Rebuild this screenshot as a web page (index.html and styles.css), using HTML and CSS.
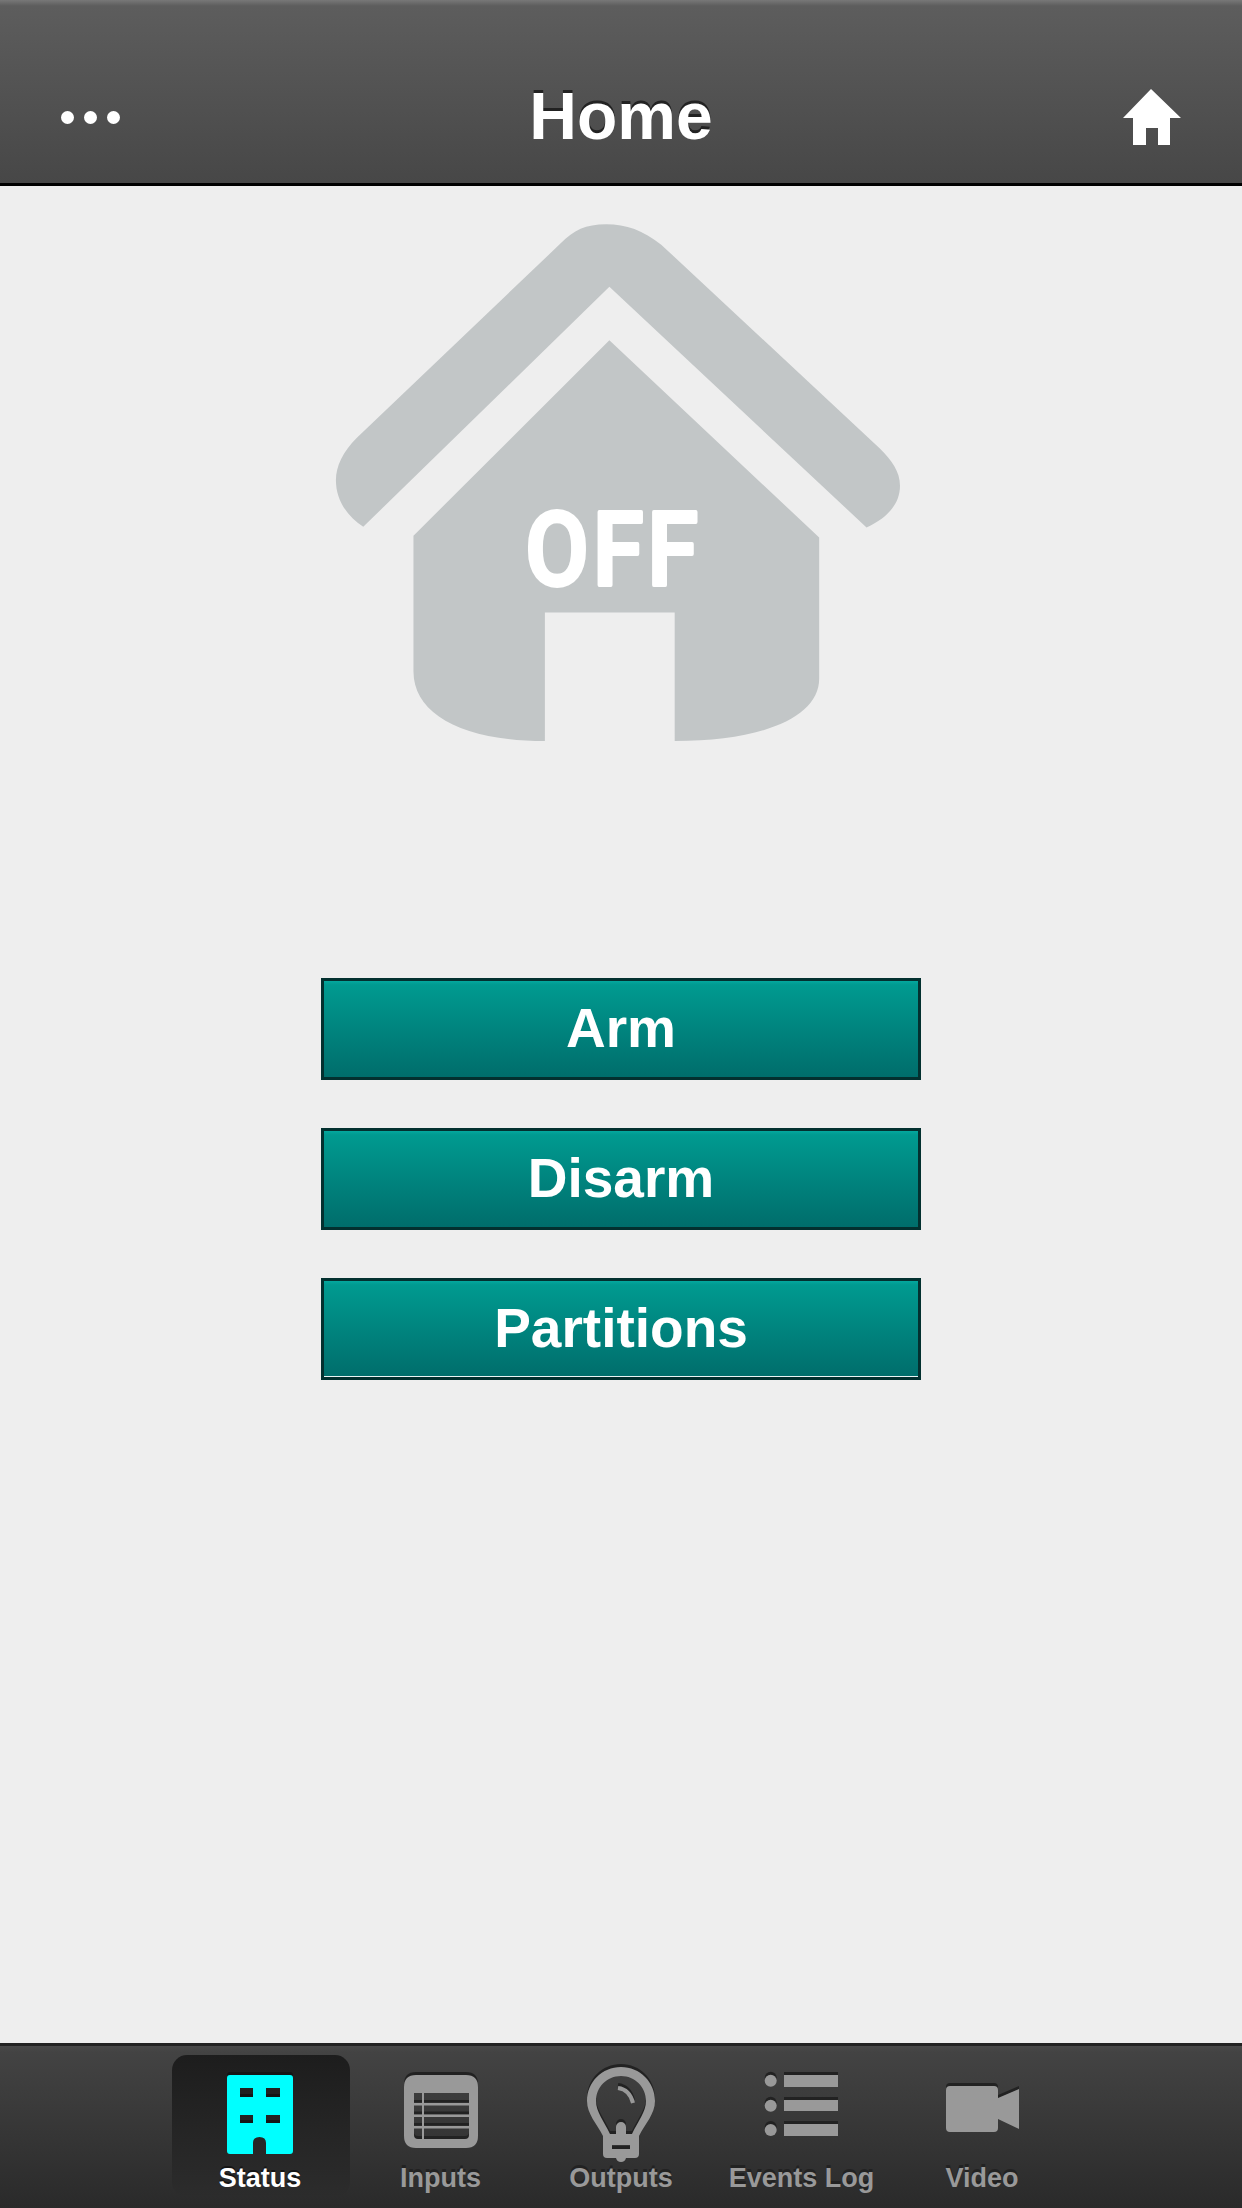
FILE: index.html
```html
<!DOCTYPE html>
<html lang="en">
<head>
<meta charset="utf-8">
<title>Home</title>
<link rel="stylesheet" href="styles.css">
</head>
<body>
<header class="topbar">
  <div class="dots"><span></span><span></span><span></span></div>
  <h1 class="title">Home</h1>
  <svg class="home-btn" viewBox="0 0 58 56"><path d="M28 0 58 29H47V56H35V39H23V56H10V29H0Z"/></svg>
</header>
<main class="content">
  <svg class="state" viewBox="2.45 0 1568 1568" preserveAspectRatio="none">
    <path class="state-fill" d="M155 915 758 243 1388 917C1440 890 1470 850 1470 800 1470 760 1450 730 1420 695L885 125C840 85 800 68 750 68 700 68 670 85 640 120L140 665C105 705 88 745 88 785 88 840 115 885 155 915Z"/>
    <path class="state-fill" d="M758 393 1272 945V1340C1272 1450 1130 1515 918 1515V1155H600V1515C400 1515 278 1440 278 1320V940Z"/>
    <text class="state-text" transform="translate(552 1079) scale(.795 1)">OFF</text>
  </svg>
  <div class="actions">
    <button class="action">Arm</button>
    <button class="action">Disarm</button>
    <button class="action action-focus">Partitions</button>
  </div>
</main>
<nav class="tabbar">
  <a class="tab tab-active">
    <svg class="tab-icon" viewBox="0 0 120 100"><path fill-rule="evenodd" d="M30 13H90Q93 13 93 16V89Q93 92 90 92H66V81Q66 75 59.500 75 53 75 53 81V92H30Q27 92 27 89V16Q27 13 30 13ZM40 26V35H53V26ZM66 26V35H80V26ZM40 53V61H53V53ZM66 53V61H80V53Z"/></svg>
    <span class="tab-label">Status</span>
  </a>
  <a class="tab">
    <svg class="tab-icon" viewBox="0 0 120 100"><path fill-rule="evenodd" d="M35 13H85Q97 13 97 25V74Q97 86 85 86H35Q23 86 23 74V25Q23 13 35 13ZM33 31V73Q33 77 37 77H84Q88 77 88 73V31Z"/><path d="M33 41H88V43.500H33ZM33 52.500H88V55H33ZM33 64H88V66.500H33ZM41 31H43V77H41Z"/></svg>
    <span class="tab-label">Inputs</span>
  </a>
  <a class="tab">
    <svg class="tab-icon" viewBox="0 0 120 100"><path fill-rule="evenodd" d="M60 5C79 5 94 20 94 39 94 52 84 62 78 74V92Q78 96 74 96H65Q64 100 60 100 56 100 55 96H46Q42 96 42 92V74C36 62 26 52 26 39 26 20 41 5 60 5ZM60 14C46 14 35 25 35 39 35 50 43 59 49 72H55V65A5 5 0 0 1 65 65V72H71C77 59 85 50 85 39 85 25 74 14 60 14ZM51 83V87H69V83Z"/><path class="bulb-glint" d="M57 26C65 27 70 33 72 41"/></svg>
    <span class="tab-label">Outputs</span>
  </a>
  <a class="tab">
    <svg class="tab-icon" viewBox="0 0 120 100"><circle cx="28.700" cy="18.700" r="6"/><circle cx="28.700" cy="43.700" r="6"/><circle cx="28.700" cy="68" r="6"/><path d="M42 13H96V25H42ZM42 38H96V49H42ZM42 62H96V74H42Z"/></svg>
    <span class="tab-label">Events Log</span>
  </a>
  <a class="tab">
    <svg class="tab-icon" viewBox="0 0 120 100"><path d="M28 24H72Q76 24 76 28V66Q76 70 72 70H28Q24 70 24 66V28Q24 24 28 24ZM76 36 97 27V67L76 57Z"/></svg>
    <span class="tab-label">Video</span>
  </a>
</nav>
</body>
</html>
```

FILE: styles.css
```css
* { box-sizing: border-box; }

html, body { height: 100%; }

body {
  margin: 0;
  display: flex;
  flex-direction: column;
  height: 2208px;
  background: #eeeeee;
  font-family: "Liberation Sans", Arial, sans-serif;
  overflow: hidden;
}

.topbar {
  flex: none;
  height: 186px;
  padding: 75px 61px 0 61px;
  display: grid;
  grid-template-columns: 1fr auto 1fr;
  grid-template-rows: 84px;
  align-items: center;
  border-bottom: 3px solid #000;
  background: linear-gradient(#787878 0, #5d5d5d 6px, #474747 100%);
}

.dots { display: flex; gap: 10px; }

.dots span {
  width: 13px;
  height: 13px;
  border-radius: 50%;
  background: #fff;
}

.title {
  margin: 0;
  padding-top: 1px;
  padding-bottom: 3px;
  font-size: 66px;
  font-weight: 700;
  line-height: 80px;
  color: #fff;
  text-shadow: 0 -3px 0 #222;
}

.home-btn {
  justify-self: end;
  width: 58px;
  height: 56px;
  fill: #fff;
}

.content {
  flex: 1;
  display: flex;
  flex-direction: column;
  align-items: center;
  padding-top: 14px;
}

.state { width: 640px; height: 560px; flex: none; }

.state-fill { fill: #c2c6c7; }

.state-text {
  font-family: Roboto, sans-serif;
  font-size: 284px;
  font-weight: 500;
  letter-spacing: 12px;
  fill: #fff;
  stroke: #fff;
  stroke-width: 11px;
  stroke-linejoin: round;
}

.actions {
  margin-top: 218px;
  display: flex;
  flex-direction: column;
  gap: 48px;
}

.action {
  display: block;
  width: 600px;
  height: 102px;
  padding: 0 0 2px;
  border: 3px solid #03302f;
  border-radius: 0;
  background: linear-gradient(#04a89e 0, #009a90 4%, #006d6b 100%);
  color: #fff;
  font-family: inherit;
  font-size: 55px;
  font-weight: 700;
}

.action-focus { box-shadow: inset 0 -1px 0 #e9f5f5; }

.tabbar {
  flex: none;
  height: 165px;
  padding-top: 9px;
  display: grid;
  grid-template-columns: repeat(5, 180.500px);
  justify-content: center;
  align-items: start;
  border-top: 3px solid #232323;
  background: linear-gradient(#4a4a4a 0, #434343 6px, #2a2a2a 100%);
}

.tab {
  height: 142px;
  padding-top: 7px;
  display: flex;
  flex-direction: column;
  align-items: center;
  border-radius: 15px;
}

.tab-active {
  margin-left: 2px;
  padding-right: 2px;
  background: linear-gradient(#1d1d1d, #2c2c2c);
}

.tab-icon {
  display: block;
  flex: none;
  width: 120px;
  height: 100px;
  overflow: visible;
  fill: #999;
  filter: drop-shadow(0 -3px 0 #222);
}

.tab-active .tab-icon { fill: #0ff; filter: drop-shadow(0 -3px 0 #151515); }

.bulb-glint { fill: none; stroke: #999; stroke-width: 4px; }

.tab-label {
  padding-top: 1px;
  font-size: 27px;
  font-weight: 700;
  line-height: 31px;
  color: #999;
  white-space: nowrap;
  text-shadow: 0 -3px 0 #222;
}

.tab-active .tab-label { color: #fff; text-shadow: 0 -2px 0 #151515; }
```
